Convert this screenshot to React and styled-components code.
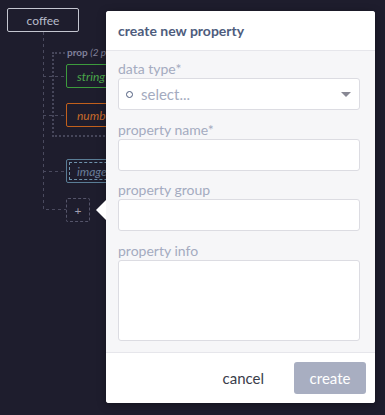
import React from 'react'
import styled, { createGlobalStyle } from 'styled-components'

const GlobalStyle = createGlobalStyle`
    html, body {
        margin: 0;
        padding: 0;
        background: #1e1d2d;
        font-family: Lato, "Open Sans", sans-serif;
    }
`

const Page = styled.div`
    position: relative;
    width: 385px;
    height: 415px;
    overflow: hidden;
    background: #1e1d2d;
`

const Node = styled.div`
    position: absolute;
    left: ${p => p.left}px;
    top: ${p => p.top}px;
    width: ${p => p.w}px;
    height: 24px;
    box-sizing: border-box;
    display: flex;
    align-items: center;
    justify-content: ${p => (p.center ? 'center' : 'flex-start')};
    padding-left: ${p => (p.center ? 0 : 10)}px;
    border: 1px ${p => p.line || 'solid'} ${p => p.color};
    border-radius: 2px;
    color: ${p => p.text || p.color};
    font-size: 12px;
    font-style: ${p => (p.italic ? 'italic' : 'normal')};
`

const InnerDash = styled.div`
    position: absolute;
    inset: 2px;
    border: 1px dashed #6f93ad;
`

const Group = styled.div`
    position: absolute;
    left: 52px;
    top: 52px;
    width: 80px;
    height: 85px;
    box-sizing: border-box;
    border: 2px dotted #46465a;
`

const GroupLabel = styled.span`
    position: absolute;
    left: 12px;
    top: -7px;
    padding: 0 1px;
    background: #1e1d2d;
    color: #80809a;
    font-size: 10px;
    font-weight: bold;
    line-height: 10px;
    white-space: nowrap;

    em {
        font-weight: normal;
    }
`

const Lines = styled.svg`
    position: absolute;
    left: 0;
    top: 0;
`

const Popover = styled.div`
    position: absolute;
    left: 106px;
    top: 11px;
    width: 269px;
    height: 392px;
    display: flex;
    flex-direction: column;
    background: #f6f6f8;
    border-radius: 3px;
    box-shadow: 0 2px 8px rgba(0, 0, 0, 0.35);

    &::before {
        content: '';
        position: absolute;
        left: -10px;
        top: 189px;
        border-style: solid;
        border-width: 10px 10px 10px 0;
        border-color: transparent #ffffff transparent transparent;
    }
`

const Header = styled.div`
    height: 39px;
    flex-shrink: 0;
    display: flex;
    align-items: center;
    padding: 0 12px;
    background: #ffffff;
    border-bottom: 1px solid #e6e6eb;
    border-radius: 3px 3px 0 0;
    color: #4e5c7d;
    font-size: 14px;
    font-weight: bold;
`

const Body = styled.div`
    flex: 1;
    display: flex;
    flex-direction: column;
    gap: 11.5px;
    padding: 10px 15px 0 12px;
`

const Field = styled.div`
    display: flex;
    flex-direction: column;
`

const Label = styled.label`
    color: #a4abc0;
    font-size: 14px;
    line-height: 16px;
    margin-bottom: 1px;
`

const Input = styled.div`
    height: ${p => p.h || 32}px;
    box-sizing: border-box;
    display: flex;
    align-items: center;
    padding: 0 10px 0 7px;
    gap: 8px;
    background: #ffffff;
    border: 1px solid #dcdce2;
    border-radius: 3px;
`

const Dot = styled.span`
    width: 5px;
    height: 5px;
    border: 1px solid #4e5c7d;
    border-radius: 50%;
`

const Placeholder = styled.span`
    flex: 1;
    color: #a4abc0;
    font-size: 15px;
`

const Caret = styled.span`
    width: 0;
    height: 0;
    margin-right: -2px;
    border-style: solid;
    border-width: 5px 5px 0 5px;
    border-color: #888894 transparent transparent transparent;
`

const Footer = styled.div`
    height: 50px;
    flex-shrink: 0;
    display: flex;
    align-items: center;
    justify-content: flex-end;
    gap: 14px;
    padding: 0 9px;
    background: #ffffff;
    border-top: 1px solid #e6e6eb;
    border-radius: 0 0 3px 3px;
`

const Button = styled.button`
    height: 32px;
    width: ${p => (p.primary ? '72px' : 'auto')};
    padding: 0 ${p => (p.primary ? 0 : 16)}px;
    border: none;
    border-radius: 3px;
    background: ${p => (p.primary ? '#a8aec1' : 'transparent')};
    color: ${p => (p.primary ? '#ffffff' : '#3a3d4a')};
    font-family: inherit;
    font-size: 15px;
`

const App = () => {
    return (
        <Page>
            <GlobalStyle />
            <Lines width="110" height="230">
                <g stroke="#4a4a5e" strokeWidth="1" strokeDasharray="3 3" fill="none">
                    <path d="M43.5 32 V209.5 H66" />
                    <path d="M43 76.5 H66" />
                    <path d="M43 115.5 H66" />
                    <path d="M43 171.5 H66" />
                </g>
            </Lines>
            <Node left={7} top={8} w={72} center color="#c4c6d0" text="#b8bccb">coffee</Node>
            <Group>
                <GroupLabel>prop <em>(2 properties)</em></GroupLabel>
            </Group>
            <Node left={66} top={64} w={80} italic color="#3d9b3d" text="#4aa84a">string</Node>
            <Node left={66} top={103} w={80} italic color="#c2601c" text="#c86a2a">number</Node>
            <Node left={66} top={159} w={80} italic color="#5a7d96" text="#6a7d9a">
                <InnerDash />
                image
            </Node>
            <Node left={66} top={198} w={24} center line="dashed" color="#55556a" text="#a0a0b0">+</Node>

            <Popover>
                <Header>create new property</Header>
                <Body>
                    <Field>
                        <Label>data type*</Label>
                        <Input>
                            <Dot />
                            <Placeholder>select...</Placeholder>
                            <Caret />
                        </Input>
                    </Field>
                    <Field>
                        <Label>property name*</Label>
                        <Input />
                    </Field>
                    <Field>
                        <Label>property group</Label>
                        <Input />
                    </Field>
                    <Field>
                        <Label>property info</Label>
                        <Input h={81} />
                    </Field>
                </Body>
                <Footer>
                    <Button>cancel</Button>
                    <Button primary>create</Button>
                </Footer>
            </Popover>
        </Page>
    )
}

export default App
